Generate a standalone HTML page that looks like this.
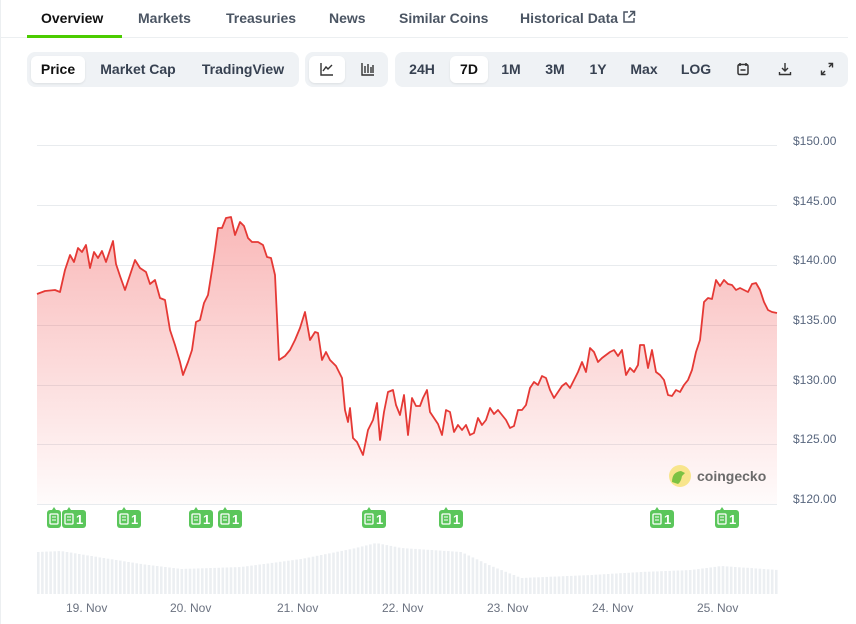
<!DOCTYPE html>
<html><head><meta charset="utf-8"><style>
body{margin:0;width:856px;height:624px;background:#fff;font-family:"Liberation Sans",sans-serif;overflow:hidden;position:relative}
.tabs{position:absolute;left:0;top:0;width:848px;height:37px;border-bottom:1px solid #eceff1}
.tab{position:absolute;top:10px;font-size:14px;color:#4b5563;font-weight:600}
.ul{position:absolute;left:27px;top:35px;width:95px;height:3px;background:#4bcc00}
.grp{position:absolute;top:52px;height:35px;background:#eff2f5;border-radius:8px}
.btn{position:absolute;top:4px;height:27px;line-height:27px;font-size:14px;font-weight:600;color:#374151;text-align:center}
.act{background:#fff;border-radius:6px;color:#111;box-shadow:0 1px 2px rgba(0,0,0,.08)}
.lbl{position:absolute;font-size:12px;color:#4b5563}
.lb{position:absolute;left:780px;font-size:12px;color:#58667e}
</style></head><body>
<div style="position:absolute;left:0;top:0;width:1px;height:624px;background:#eceff1"></div>
<div class="tabs"></div>
<div class="tab" style="left:41px;color:#111">Overview</div>
<div class="tab" style="left:138px">Markets</div>
<div class="tab" style="left:226px">Treasuries</div>
<div class="tab" style="left:329px">News</div>
<div class="tab" style="left:399px">Similar Coins</div>
<div class="tab" style="left:520px">Historical Data <svg width="14" height="14" viewBox="0 0 14 14" style="vertical-align:-1px"><path d="M6 2H2v10h10V8M8 1.5h4.5V6M12.5 1.5L6.5 7.5" fill="none" stroke="#4b5563" stroke-width="1.5"/></svg></div>
<div class="ul"></div>
<div class="grp" style="left:27px;width:272px">
<div class="btn act" style="left:4px;width:54px">Price</div>
<div class="btn" style="left:64px;width:94px">Market Cap</div>
<div class="btn" style="left:166px;width:100px">TradingView</div></div>
<div class="grp" style="left:305px;width:83px">
<div class="btn act" style="left:4px;width:36px"><svg width="14" height="14" viewBox="0 0 14 14" style="margin-top:6px"><path d="M1 1v12h12M3 9l3-4 2 2 4-4" fill="none" stroke="#333" stroke-width="1.4"/></svg></div>
<div class="btn" style="left:45px;width:36px"><svg width="14" height="14" viewBox="0 0 14 14" style="margin-top:6px"><path d="M1 1v12h12M4 4v7M7 2v9M10 5v6M12 3v8" fill="none" stroke="#333" stroke-width="1.4"/></svg></div></div>
<div class="grp" style="left:395px;width:453px">
<div class="btn" style="left:6px;width:42px">24H</div>
<div class="btn act" style="left:55px;width:38px">7D</div>
<div class="btn" style="left:100px;width:32px">1M</div>
<div class="btn" style="left:143px;width:34px">3M</div>
<div class="btn" style="left:187px;width:32px">1Y</div>
<div class="btn" style="left:228px;width:42px">Max</div>
<div class="btn" style="left:280px;width:42px">LOG</div>
<div class="btn" style="left:336px;width:24px"><svg width="14" height="14" viewBox="0 0 14 14" style="margin-top:6px"><rect x="2" y="2.5" width="10" height="10" rx="1.5" fill="none" stroke="#333" stroke-width="1.5"/><path d="M4 1v3M10 1v3M4.5 8h5" stroke="#333" stroke-width="1.5"/></svg></div>
<div class="btn" style="left:378px;width:24px"><svg width="14" height="14" viewBox="0 0 14 14" style="margin-top:6px"><path d="M7 1v8M4 6l3 3 3-3M1.5 10v2.5h11V10" fill="none" stroke="#333" stroke-width="1.4"/></svg></div>
<div class="btn" style="left:420px;width:24px"><svg width="14" height="14" viewBox="0 0 14 14" style="margin-top:6px"><path d="M8.5 1.5h4v4M12.5 1.5L9 5M5.5 12.5h-4v-4M1.5 12.5L5 9" fill="none" stroke="#333" stroke-width="1.4"/></svg></div>
</div>
<svg width="856" height="624" style="position:absolute;left:0;top:0">
<defs><linearGradient id="g" x1="0" y1="0" x2="0" y2="1"><stop offset="0" stop-color="#ef4444" stop-opacity=".38"/><stop offset="1" stop-color="#ef4444" stop-opacity=".02"/></linearGradient></defs>
<g stroke="#e8ebee" stroke-width="1"><line x1="37" x2="777" y1="145.5" y2="145.5"/><line x1="37" x2="777" y1="205.5" y2="205.5"/><line x1="37" x2="777" y1="265.5" y2="265.5"/><line x1="37" x2="777" y1="325.5" y2="325.5"/><line x1="37" x2="777" y1="385.5" y2="385.5"/><line x1="37" x2="777" y1="444.5" y2="444.5"/><line x1="37" x2="777" y1="504.5" y2="504.5"/></g>
<path id="ar" fill="url(#g)"/>
<path id="ln" fill="none" stroke="#e53935" stroke-width="1.8" stroke-linejoin="round"/>
<g id="vb" fill="#eceff2"></g>
<g fill="#6b7280" font-size="12" font-family="Liberation Sans,sans-serif">
<text x="66" y="612">19. Nov</text><text x="170" y="612">20. Nov</text><text x="277" y="612">21. Nov</text><text x="382" y="612">22. Nov</text><text x="487" y="612">23. Nov</text><text x="592" y="612">24. Nov</text><text x="697" y="612">25. Nov</text></g>
<g fill="#58667e" font-size="12" font-family="Liberation Sans,sans-serif">
<text x="793" y="145">$150.00</text><text x="793" y="205">$145.00</text><text x="793" y="264">$140.00</text><text x="793" y="324">$135.00</text><text x="793" y="384">$130.00</text><text x="793" y="443">$125.00</text><text x="793" y="503">$120.00</text></g>
<circle cx="680" cy="476" r="11" fill="#f8e58c"/><path d="M672 482q0-10 9-11l4 2-3 3q-1 6-4 8z" fill="#7cc242"/>
<text x="697" y="481" font-size="14" font-weight="bold" fill="#6b6b6b" font-family="Liberation Sans,sans-serif">coingecko</text>
<g id="nb"></g>
</svg>
<script>
var p=[37,294,45,291,55,290,60,292,65,270,70,255,74,262,78,248,82,252,86,245,90,268,94,252,98,258,102,251,106,262,110,250,113,241,116,264,120,276,125,290,130,275,135,260,140,268,146,272,150,284,155,280,160,298,165,300,170,330,175,345,180,362,183,375,188,362,192,350,196,322,200,320,204,303,208,295,212,270,215,250,218,228,222,228,226,218,231,217,235,235,240,222,244,226,248,238,252,242,258,242,263,245,267,257,271,258,275,275,279,360,285,356,290,350,295,340,300,328,305,312,310,340,315,332,318,333,322,360,326,352,330,360,336,366,342,378,345,410,348,422,350,408,353,438,357,442,363,455,368,430,373,420,377,403,380,440,384,412,388,392,393,390,396,405,400,415,404,395,408,435,412,398,416,406,420,406,423,398,427,390,430,412,434,418,438,424,442,435,446,410,450,412,454,432,458,425,462,430,466,425,470,435,474,433,478,418,482,425,486,420,490,408,494,414,498,410,502,415,506,420,510,428,514,426,518,410,522,410,526,405,530,388,534,382,538,385,542,376,546,378,550,390,554,398,558,392,562,386,566,383,570,388,574,380,578,372,582,362,586,372,590,348,594,352,598,362,602,358,606,355,610,352,614,350,618,356,622,350,626,375,630,368,634,372,638,365,640,345,644,345,648,368,652,350,656,372,660,375,664,380,668,395,672,396,676,390,680,392,684,385,688,380,692,370,696,352,700,340,704,302,708,298,712,299,716,280,720,286,724,280,728,284,732,285,736,290,740,288,744,290,748,292,752,284,756,283,760,290,764,302,768,310,772,312,777,313];
var d="M"+p[0]+" "+p[1];for(var i=2;i<p.length;i+=2)d+="L"+p[i]+" "+p[i+1];
document.getElementById('ln').setAttribute('d',d);
document.getElementById('ar').setAttribute('d',d+"L777 504L37 504Z");
var v=[[37,552],[60,551],[90,556],[140,564],[180,569],[240,567],[300,559],[350,549],[375,543],[400,548],[460,552],[490,566],[520,578],[590,575],[640,572],[690,570],[720,566],[777,570]];
var s="";for(var x=37;x<777;x+=4.1){var y=594;for(var k=0;k<v.length-1;k++){if(x>=v[k][0]&&x<=v[k+1][0]){y=v[k][1]+(v[k+1][1]-v[k][1])*(x-v[k][0])/(v[k+1][0]-v[k][0]);}}s+='<rect x="'+x.toFixed(1)+'" y="'+y.toFixed(1)+'" width="2.6" height="'+(594-y).toFixed(1)+'"/>';}
document.getElementById('vb').innerHTML=s;
var n=[[47,0],[62,1],[117,1],[189,1],[218,1],[362,1],[439,1],[650,1],[715,1]],t="";
n.forEach(function(a){var x=a[0];t+='<rect x="'+x+'" y="510" width="'+(a[1]?24:14)+'" height="18" rx="3" fill="#5bc65b"/><path d="M'+(x+5)+' 510l2-3 2 3z" fill="#5bc65b"/><rect x="'+(x+3)+'" y="514" width="8" height="10" rx="1" fill="none" stroke="#fff" stroke-width="1.3"/><path d="M'+(x+5)+' 517h4M'+(x+5)+' 520h4" stroke="#fff"/>'+(a[1]?'<text x="'+(x+14)+'" y="524" fill="#fff" font-size="13" font-weight="bold" font-family="Liberation Sans,sans-serif">1</text>':'');});
document.getElementById('nb').innerHTML=t;
</script>
</body></html>
